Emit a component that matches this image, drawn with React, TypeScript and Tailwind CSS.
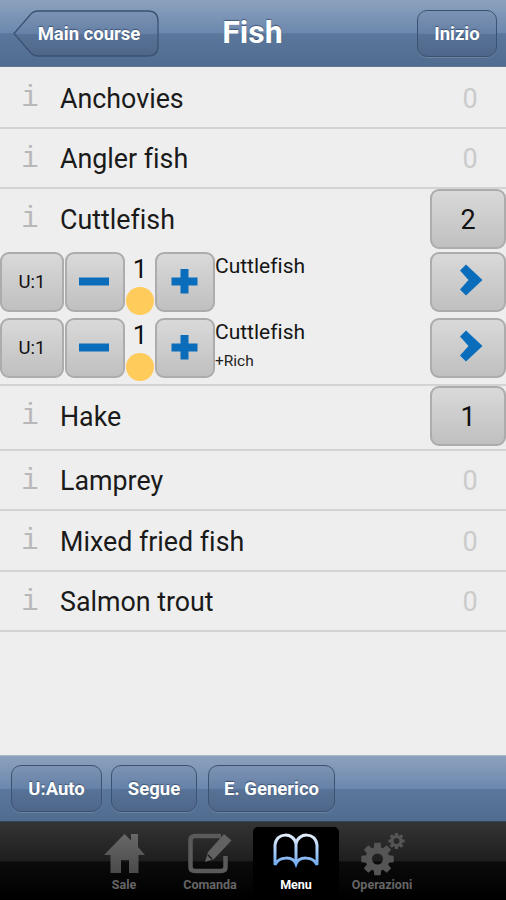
import React, { useState } from 'react';
import clsx from 'clsx';

type OrderLine = { id: number; name: string; qty: number; note?: string };
type Dish = { name: string; qty: number; height: string; lines?: OrderLine[] };

const DISHES: Dish[] = [
  { name: 'Anchovies', qty: 0, height: 'h-[61px]' },
  { name: 'Angler fish', qty: 0, height: 'h-[60px]' },
  {
    name: 'Cuttlefish',
    qty: 2,
    height: 'h-[197px]',
    lines: [
      { id: 1, name: 'Cuttlefish', qty: 1 },
      { id: 2, name: 'Cuttlefish', qty: 1, note: '+Rich' },
    ],
  },
  { name: 'Hake', qty: 1, height: 'h-[65px]' },
  { name: 'Lamprey', qty: 0, height: 'h-[60px]' },
  { name: 'Mixed fried fish', qty: 0, height: 'h-[61px]' },
  { name: 'Salmon trout', qty: 0, height: 'h-[60px]' },
];

const BAR = 'bg-[linear-gradient(#8ca1bd_0%,#6c88ae_50%,#5b779c_51%,#506c8f_100%)]';

// Blue button used in the header and in the bottom toolbar
function BarButton({ label, className }: { label: string; className?: string }) {
  return (
    <button
      className={clsx(
        'h-[47px] rounded-[10px] border-[1.5px] border-[#3c5272] bg-[linear-gradient(#7c93b3_0%,#6681a7_50%,#587397_51%,#4e668a_100%)] pt-0.5 text-[18.5px] font-bold leading-none text-white shadow-[0_1px_0_rgba(255,255,255,0.15)] [text-shadow:0_-1px_1px_rgba(30,50,80,0.6)]',
        className
      )}
    >
      {label}
    </button>
  );
}

// Header button with an arrow on its left side
function BackButton({ label }: { label: string }) {
  return (
    <button className="relative h-[47px] w-[146px] pt-0.5 text-[18.5px] font-bold leading-none text-white [text-shadow:0_-1px_1px_rgba(30,50,80,0.6)]">
      <svg className="absolute inset-0" width="146" height="47" viewBox="0 0 146 47">
        <defs>
          <linearGradient id="back" x1="0" y1="0" x2="0" y2="1">
            <stop offset="0" stopColor="#7c93b3" />
            <stop offset="0.5" stopColor="#6681a7" />
            <stop offset="0.51" stopColor="#587397" />
            <stop offset="1" stopColor="#4e668a" />
          </linearGradient>
        </defs>
        <path
          d="M25 1H135Q145 1 145 11V36Q145 46 135 46H25Q20 46 17 42L1 23.500L17 5Q20 1 25 1Z"
          fill="url(#back)"
          stroke="#3c5272"
          strokeWidth="1.300"
        />
      </svg>
      <span className="relative left-[3px]">{label}</span>
    </button>
  );
}

function GrayButton({ className, children, onClick }: { className: string; children: React.ReactNode; onClick?: () => void }) {
  return (
    <button
      onClick={onClick}
      className={clsx(
        'flex h-[60px] shrink-0 items-center justify-center rounded-[9px] border-2 border-[#acacac] bg-linear-to-b from-[#dadada] to-[#bfbfbf] bg-origin-border text-[#111]',
        className
      )}
    >
      {children}
    </button>
  );
}

function LineRow({ line, onChange }: { line: OrderLine; onChange: (delta: number) => void }) {
  return (
    <div className="flex h-[66px] items-start">
      <GrayButton className="w-16 pt-0.5 text-[18.5px] text-[#3a3a3a]">U:1</GrayButton>
      <GrayButton className="ml-px w-[60px]" onClick={() => onChange(-1)}>
        <svg className="-ml-0.5" width="32" height="32" viewBox="0 0 32 32" fill="#0a6dbb">
          <path d="M1 11.500H31V19.500H1Z" />
        </svg>
      </GrayButton>
      <div className="flex w-[30px] shrink-0 flex-col items-center">
        <span className="h-[35px] text-[26px] leading-[35px] text-[#111]">{line.qty}</span>
        <span className="size-7 rounded-full bg-[#ffcb5b]" />
      </div>
      <GrayButton className="w-[60px]" onClick={() => onChange(1)}>
        <svg width="32" height="32" viewBox="0 0 32 32" fill="#0a6dbb">
          <path d="M11.500 3H19.500V11.500H28.500V19.500H19.500V27.500H11.500V19.500H2.500V11.500H11.500Z" />
        </svg>
      </GrayButton>
      <div className="flex-1">
        <p className="mt-0.5 text-[21px] leading-6 text-[#151515]">{line.name}</p>
        {line.note && <p className="mt-[7px] text-[15.5px] leading-5 text-[#222]">{line.note}</p>}
      </div>
      <GrayButton className="w-[76px]">
        <svg className="-mt-1 ml-1.5" width="24" height="32" viewBox="0 0 24 32" fill="#0a6dbb">
          <path d="M7 0.500L23.500 16L7 31.500L1 25.500L9.500 16L1 6.500Z" />
        </svg>
      </GrayButton>
    </div>
  );
}

function DishRow({ dish }: { dish: Dish }) {
  const [lines, setLines] = useState(dish.lines ?? []);

  const handleChange = (id: number, delta: number) => {
    setLines(lines.map((l) => (l.id === id ? { ...l, qty: Math.max(0, l.qty + delta) } : l)));
  };

  return (
    <li className={clsx('border-b-2 border-[#d2d3d4]', dish.height)}>
      <div className={clsx('flex items-center', dish.qty ? 'h-[63px] pb-1' : 'h-full')}>
        <span className="w-[60px] pt-[3px] text-center font-['Liberation_Mono',monospace] text-[29px] leading-8 text-[#b8b8b8]">i</span>
        <span className="flex-1 pt-0.5 text-[26.8px] leading-8 text-[#1a1a1a]">{dish.name}</span>
        {dish.qty ? (
          <GrayButton className="w-[76px] pt-1 text-[27px]">{dish.qty}</GrayButton>
        ) : (
          <span className="w-[72px] pt-0.5 text-center text-[27px] leading-8 text-[#cbcbcb]">{dish.qty}</span>
        )}
      </div>
      {lines.map((line) => (
        <LineRow key={line.id} line={line} onChange={(delta) => handleChange(line.id, delta)} />
      ))}
    </li>
  );
}

function HomeIcon() {
  return (
    <svg width="44" height="44" viewBox="0 0 44 44" fill="url(#tab)">
      <path d="M2 24L22.500 3L29 9.500V3H36V16L43 24H36.500V42H27V29H19V42H8.500V24Z" />
    </svg>
  );
}

function EditIcon() {
  return (
    <svg width="44" height="44" viewBox="0 0 44 44">
      <path d="M33 5H7Q2.500 5 2.500 9.500V36Q2.500 40 7 40H33Q37.500 40 37.500 36V25" fill="none" stroke="#5a5a5a" strokeWidth="4.500" />
      <path d="M36 3L43.500 9.500L26 28L17 31L20 21Z" fill="#626262" />
      <path d="M20 24L24 28" stroke="#1a1a1a" strokeWidth="1.500" />
    </svg>
  );
}

function BookIcon() {
  return (
    <svg width="46" height="44" viewBox="0 0 46 44" fill="none" stroke="url(#book)" strokeWidth="3">
      <path d="M2 34V14C3 1 21 1 23 13C25 1 43 1 44 14V34C40 25 26 25 23 33C20 25 6 25 2 34ZM23 13V33" />
    </svg>
  );
}

function Gear({ cx, cy, r, hole, tooth }: { cx: number; cy: number; r: number; hole: number; tooth: number }) {
  return (
    <g transform={`translate(${cx} ${cy})`}>
      <circle r={(r + hole) / 2} fill="none" stroke="#555" strokeWidth={r - hole} />
      {[0, 45, 90, 135, 180, 225, 270, 315].map((a) => (
        <path key={a} transform={`rotate(${a})`} d={`M${-tooth} ${-r + 1}L${-tooth * 0.85} ${-r * 1.35}H${tooth * 0.85}L${tooth} ${-r + 1}Z`} fill="#555" />
      ))}
    </g>
  );
}

function GearsIcon() {
  return (
    <svg width="46" height="46" viewBox="0 0 46 46">
      <Gear cx={18.5} cy={28} r={12} hole={5.5} tooth={3.7} />
      <Gear cx={37.5} cy={10} r={6} hole={3} tooth={1.8} />
    </svg>
  );
}

const TABS = [
  { label: 'Sale', icon: <HomeIcon /> },
  { label: 'Comanda', icon: <EditIcon /> },
  { label: 'Menu', icon: <BookIcon /> },
  { label: 'Operazioni', icon: <GearsIcon /> },
];

export default function App() {
  const [tab, setTab] = useState('Menu');

  return (
    <div className="flex h-[900px] w-[506px] flex-col overflow-hidden bg-[#eee] font-[Roboto,sans-serif] [font-variant-ligatures:none]">
      {/* Shared icon gradients */}
      <svg className="absolute size-0">
        <defs>
          <linearGradient id="tab" x1="0" y1="0" x2="0" y2="1">
            <stop offset="0" stopColor="#686868" />
            <stop offset="1" stopColor="#4a4a4a" />
          </linearGradient>
          <linearGradient id="book" x1="0" y1="0" x2="0" y2="1">
            <stop offset="0" stopColor="#e4effd" />
            <stop offset="1" stopColor="#6faaf0" />
          </linearGradient>
        </defs>
      </svg>

      {/* Header */}
      <header className={clsx('grid h-[67px] shrink-0 grid-cols-[1fr_auto_1fr] items-center border-b border-[#66788f] pl-[11px] pr-[9px]', BAR)}>
        <div className="pl-0.5">
          <BackButton label="Main course" />
        </div>
        <h1 className="-mt-0.5 -ml-[3px] text-[32px] font-bold leading-9 text-white [text-shadow:0_-1px_1px_rgba(30,50,80,0.6)]">Fish</h1>
        <BarButton label="Inizio" className="w-[80px] justify-self-end" />
      </header>

      {/* Dishes */}
      <ul className="flex-1 pt-px">
        {DISHES.map((dish) => (
          <DishRow key={dish.name} dish={dish} />
        ))}
      </ul>

      {/* Order actions */}
      <div className={clsx('flex h-[67px] shrink-0 items-center border-b border-t border-b-[#30435c] border-t-[#a9b8ca] pl-[11px]', BAR)}>
        <BarButton label="U:Auto" className="w-[91px]" />
        <BarButton label="Segue" className="ml-[9px] w-[86px]" />
        <BarButton label="E. Generico" className="ml-[11px] w-[127px]" />
      </div>

      {/* Tab bar */}
      <nav className="flex h-[78px] shrink-0 justify-center bg-[linear-gradient(#343434_0%,#1e1e1e_50%,#0b0b0b_51%,#000_100%)] pt-[5px]">
        {TABS.map((t) => (
          <button
            key={t.label}
            onClick={() => setTab(t.label)}
            className={clsx(
              'flex h-[71px] w-[86px] flex-col items-center rounded-[5px] pt-1 text-[12.5px] font-bold',
              tab === t.label ? 'bg-black text-white' : 'text-[#666]'
            )}
          >
            <span className="h-[46px]">{t.icon}</span>
            <span className="leading-4">{t.label}</span>
          </button>
        ))}
      </nav>
    </div>
  );
}
